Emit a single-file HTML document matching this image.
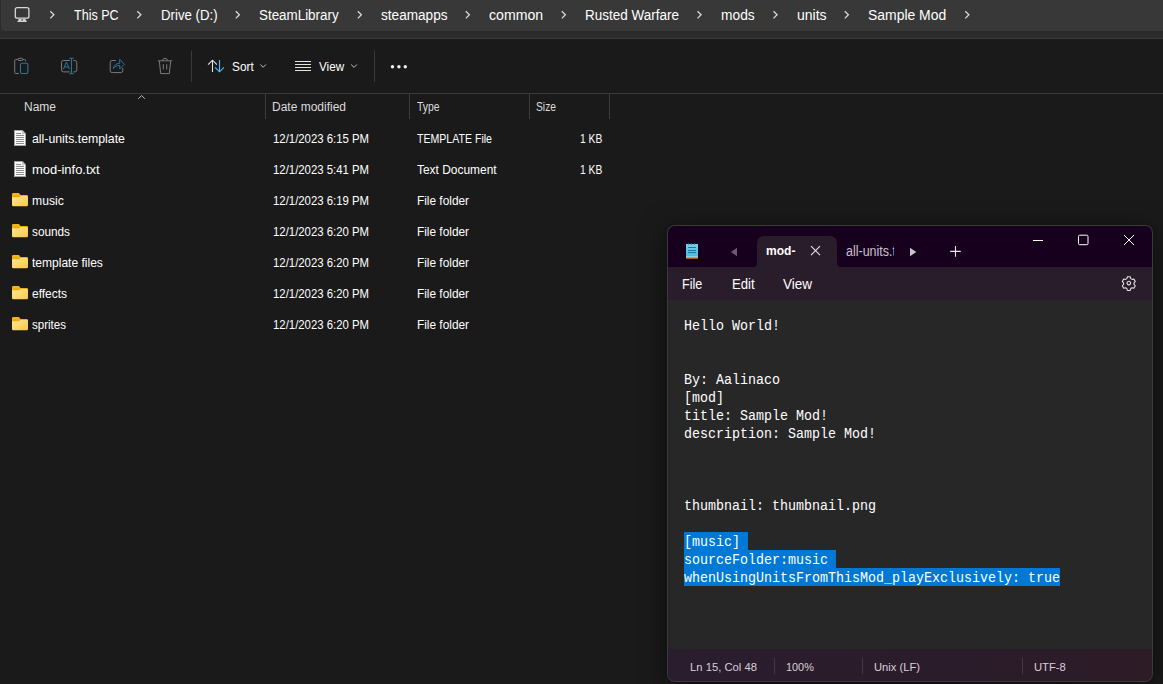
<!DOCTYPE html>
<html><head><meta charset="utf-8">
<style>
*{margin:0;padding:0;box-sizing:border-box}
html,body{width:1163px;height:684px;overflow:hidden;background:#1a1a1a}
body{position:relative;font-family:"Liberation Sans",sans-serif}
.a{position:absolute}
.t{position:absolute;white-space:pre;line-height:1;transform-origin:0 0;font-family:"Liberation Sans",sans-serif}
svg{position:absolute;overflow:visible}
.mono{position:absolute;left:684px;top:317px;font-family:"Liberation Mono",monospace;font-size:14.5px;line-height:18px;color:#fff;white-space:pre;transform-origin:0 0}
</style></head><body>
<!-- ===== Explorer header strip ===== -->
<div class="a" style="left:0;top:0;width:1163px;height:38px;background:#2c2c2c"></div>
<div class="a" style="left:1px;top:-10px;width:1200px;height:41px;background:#383838;border-radius:4px"></div>
<div class="a" style="left:0;top:38px;width:1163px;height:1px;background:#3a3a3a"></div>
<!-- monitor icon -->
<svg style="left:0;top:0" width="40" height="30">
 <rect x="15.3" y="7.6" width="13.6" height="10.6" rx="2" fill="none" stroke="#d8d8d8" stroke-width="1.3"/>
 <path d="M17.2 21.9h9.8l-1.6-3h-6.6z" fill="#d0d0d0"/>
 <rect x="21.4" y="19.4" width="1.6" height="1.1" fill="#383838"/>
</svg>
<!-- breadcrumb chevrons -->
<svg style="left:0;top:0" width="1163" height="30">
 <g fill="none" stroke="#dcdcdc" stroke-width="1.25">
  <path d="M50.3 11.2l3.6 3.6-3.6 3.6"/>
  <path d="M137.3 11.2l3.6 3.6-3.6 3.6"/>
  <path d="M235.8 11.2l3.6 3.6-3.6 3.6"/>
  <path d="M357.8 11.2l3.6 3.6-3.6 3.6"/>
  <path d="M465.8 11.2l3.6 3.6-3.6 3.6"/>
  <path d="M561.8 11.2l3.6 3.6-3.6 3.6"/>
  <path d="M697.5 11.2l3.6 3.6-3.6 3.6"/>
  <path d="M773.5 11.2l3.6 3.6-3.6 3.6"/>
  <path d="M844.8 11.2l3.6 3.6-3.6 3.6"/>
  <path d="M965.3 11.2l3.6 3.6-3.6 3.6"/>
 </g>
</svg>
<!-- ===== Command bar ===== -->
<svg style="left:0;top:0" width="420" height="95">
 <!-- paste -->
 <path d="M18.7 73.5h-3a1 1 0 0 1-1-1V60.5a1 1 0 0 1 1-1h2M22.8 59.5h1.8a1 1 0 0 1 1 1v1" fill="none" stroke="#7b7b7b" stroke-width="1"/>
 <rect x="17.8" y="58.3" width="5" height="2.2" rx="1.1" fill="none" stroke="#7b7b7b" stroke-width="1"/>
 <rect x="20.5" y="63.2" width="7.4" height="10.3" rx="1.4" fill="none" stroke="#2b739c" stroke-width="1.1"/>
 <!-- rename -->
 <path d="M69.8 60.5h-6.3a2 2 0 0 0-2 2v7.4a2 2 0 0 0 2 2h6.3M73.3 60.5h1.5a2 2 0 0 1 2 2v7.4a2 2 0 0 1-2 2h-1.5" fill="none" stroke="#7b7b7b" stroke-width="1"/>
 <path d="M71.5 58.3v15.5M69.2 58.3h4.6M69.2 73.8h4.6" fill="none" stroke="#2b739c" stroke-width="1.1"/>
 <path d="M63.3 69.3l3.1-7.3 3.1 7.3M64.4 67h4.1" fill="none" stroke="#2b739c" stroke-width="1"/>
 <!-- share -->
 <path d="M115.8 60.5h-3.6a2 2 0 0 0-2 2v8.1a2 2 0 0 0 2 2h8.6a2 2 0 0 0 2-2v-2.6" fill="none" stroke="#7b7b7b" stroke-width="1"/>
 <path d="M113.3 68.6c0.6-3.3 3-5.3 6.4-5.3v-4l4.6 5-4.6 4.7v-3.6c-2.6 0-4.6 1.1-6.4 3.2z" fill="none" stroke="#2b739c" stroke-width="1" stroke-linejoin="round"/>
 <!-- trash -->
 <path d="M157.8 60.8h14.3M159.3 61.2l1.4 12.4h8.6l1.4-12.4M163.3 64.2v5.2M166.7 64.2v5.2M162.6 60.6a2.4 2.2 0 0 1 4.8 0" fill="none" stroke="#7b7b7b" stroke-width="1"/>
 <!-- separators -->
 <path d="M191.5 50.5v31.5M374.5 50.5v31.5" stroke="#3a3a3a" stroke-width="1"/>
 <!-- sort icon -->
 <path d="M212.5 60.3v11.6M208.1 64.6l4.4-4.4 4.4 4.4" fill="none" stroke="#e2e2e2" stroke-width="1.1"/>
 <path d="M219.5 60.1v11.6M215.1 67.4l4.4 4.4 4.4-4.4" fill="none" stroke="#4cc2ff" stroke-width="1.1"/>
 <path d="M260.3 64.5l2.8 2.8 2.8-2.8" fill="none" stroke="#c0c0c0" stroke-width="1"/>
 <!-- view icon -->
 <path d="M295 61.5h16M295 64.5h16M295 67.5h16M295 70.5h16" stroke="#e4e4e4" stroke-width="1"/>
 <path d="M351.1 64.5l2.9 2.9 2.9-2.9" fill="none" stroke="#c0c0c0" stroke-width="1"/>
 <!-- more dots -->
 <circle cx="392.5" cy="66.7" r="1.7" fill="#f0f0f0"/><circle cx="398.9" cy="66.7" r="1.7" fill="#f0f0f0"/><circle cx="405.3" cy="66.7" r="1.7" fill="#f0f0f0"/>
</svg>
<div class="a" style="left:0;top:93px;width:1163px;height:1px;background:#393939"></div>
<!-- header column separators & sort caret -->
<svg style="left:0;top:0" width="620" height="125">
 <path d="M265.5 94v25M409.5 94v25M529.5 94v25M609.5 94v25" stroke="#3c3c3c" stroke-width="1"/>
 <path d="M138.3 98.8l3.3-3.3 3.3 3.3" fill="none" stroke="#bcbcbc" stroke-width="1"/>
</svg>
<!-- file icons -->
<svg style="left:0;top:0" width="40" height="340">
 <defs>
  <g id="doc">
   <path d="M0 0h8.5l3.5 3.5V16H0z" fill="#a4a4a4"/>
   <path d="M1 1h7.2l2.8 2.8V15H1z" fill="#fbfbfb"/>
   <path d="M8 0.3v3.9h3.9z" fill="#c8c8c8"/>
   <rect x="2" y="3" width="5" height="1" fill="#8e8e8e"/>
   <rect x="2" y="5" width="8" height="1" fill="#8e8e8e"/>
   <rect x="2" y="7" width="8" height="1" fill="#8e8e8e"/>
   <rect x="2" y="9" width="8" height="1" fill="#8e8e8e"/>
   <rect x="2" y="11" width="8" height="1" fill="#8e8e8e"/>
   <rect x="2" y="13" width="8" height="1" fill="#8e8e8e"/>
  </g>
  <linearGradient id="fg" x1="0" y1="0" x2="1" y2="1"><stop offset="0" stop-color="#ffe796"/><stop offset="1" stop-color="#f7c848"/></linearGradient>
  <linearGradient id="ft" x1="0" y1="0" x2="0" y2="1"><stop offset="0" stop-color="#f7b81c"/><stop offset="1" stop-color="#e9a404"/></linearGradient>
  <g id="folder">
   <path d="M0 1.3A1.3 1.3 0 0 1 1.3 0h5.6l1.6 1.9h6.2a1.3 1.3 0 0 1 1.3 1.3V5H0z" fill="url(#ft)"/>
   <path d="M0 4.2h7.2l1.2-1.2h6.3a1.3 1.3 0 0 1 1.3 1.3v7.6a1.3 1.3 0 0 1-1.3 1.3H1.3A1.3 1.3 0 0 1 0 11.9z" fill="url(#fg)"/>
  </g>
 </defs>
 <use href="#doc" x="14" y="130"/>
 <use href="#doc" x="14" y="161"/>
 <use href="#folder" x="12" y="193"/>
 <use href="#folder" x="12" y="224"/>
 <use href="#folder" x="12" y="255"/>
 <use href="#folder" x="12" y="286"/>
 <use href="#folder" x="12" y="317"/>
</svg>

<!-- ===== Notepad window ===== -->
<div class="a" style="left:667px;top:225px;width:486px;height:457px;border-radius:8px;background:#3a3a3a;box-shadow:0 6px 28px rgba(0,0,0,0.55)"></div>
<div class="a" style="left:668px;top:226px;width:484px;height:455px;border-radius:7px;overflow:hidden;background:#272727">
  <div class="a" style="left:0;top:0;width:484px;height:41px;background:#17001d"></div>
  <div class="a" style="left:0;top:41px;width:484px;height:33px;background:#2a1d2b"></div>
  <div class="a" style="left:0;top:423px;width:484px;height:32px;background:linear-gradient(90deg,#2a1d2d,#2b1c2b 60%,#2d1b26)"></div>
</div>
<!-- active tab -->
<svg style="left:0;top:0" width="1163" height="300">
 <path d="M753 267a4 4 0 0 0 4-4V243a7 7 0 0 1 7-7h66a7 7 0 0 1 7 7v20a4 4 0 0 0 4 4z" fill="#2a1d2b"/>
 <!-- notepad icon -->
 <rect x="686" y="244" width="12" height="14" fill="#5cc4e6"/>
 <rect x="686" y="244" width="12" height="14" fill="url(#npg)"/>
 <rect x="686" y="256.6" width="12" height="0.9" fill="#e8f6fa"/><rect x="686" y="257.5" width="12" height="1.4" fill="#c0600f"/>
 <path d="M688 247.5h8M688 250.5h8M688 252.5h8" stroke="#17708f" stroke-width="0.9"/>
 <path d="M688.5 243.3v1.5M691.5 243.3v1.5M694.5 243.3v1.5" stroke="#17708f" stroke-width="0.9"/>
 <defs><linearGradient id="npg" x1="0" y1="0" x2="0" y2="1"><stop offset="0" stop-color="#8bdcf5" stop-opacity="0.6"/><stop offset="1" stop-color="#2fa9d6" stop-opacity="0.4"/></linearGradient></defs>
 <!-- tab scroll arrows -->
 <path d="M731 252l6-4.2v8.4z" fill="#6d5a75"/>
 <path d="M916.3 252l-6.3-4.2v8.4z" fill="#c9c3cc"/>
 <!-- tab close -->
 <path d="M811 246.2l9 9M820 246.2l-9 9" stroke="#e0dbe2" stroke-width="1.2"/>
 <!-- plus -->
 <path d="M955.5 246v10.8M950.2 251.4h10.6" stroke="#e8e8e8" stroke-width="1.1"/>
 <!-- window controls -->
 <path d="M1033 240.5h10" stroke="#ffffff" stroke-width="1"/>
 <rect x="1078.5" y="235.2" width="9.5" height="9.5" rx="1.2" fill="none" stroke="#ffffff" stroke-width="1"/>
 <path d="M1124 235l10 10M1134 235l-10 10" stroke="#ffffff" stroke-width="1"/>
 <!-- gear -->
 <g transform="translate(1128.8 283.1) scale(0.88)" fill="none" stroke="#e8e4ea" stroke-width="1.2">
  <path d="M-1.6-7.2h3.2l0.6 2.1 1.5 0.9 2.1-0.5 1.6 2.8-1.5 1.6v1.7l1.5 1.6-1.6 2.8-2.1-0.5-1.5 0.9-0.6 2.1h-3.2l-0.6-2.1-1.5-0.9-2.1 0.5-1.6-2.8 1.5-1.6v-1.7l-1.5-1.6 1.6-2.8 2.1 0.5 1.5-0.9z" stroke-linejoin="round"/>
  <circle r="2"/>
 </g>
</svg>
<!-- status separators -->
<div class="a" style="left:774px;top:658px;width:1px;height:16px;background:#413843"></div>
<div class="a" style="left:862px;top:658px;width:1px;height:16px;background:#413843"></div>
<div class="a" style="left:1022px;top:658px;width:1px;height:16px;background:#413843"></div>
<!-- selection -->
<div class="a" style="left:684px;top:532px;width:64px;height:18px;background:#0078d4"></div>
<div class="a" style="left:684px;top:550px;width:152px;height:18px;background:#0078d4"></div>
<div class="a" style="left:684px;top:568px;width:376px;height:18px;background:#0078d4"></div>
<div class="mono" style="transform:scaleX(0.9195)">Hello World!


By: Aalinaco
[mod]
title: Sample Mod!
description: Sample Mod!



thumbnail: thumbnail.png

[music]
sourceFolder:music
whenUsingUnitsFromThisMod_playExclusively: true</div>
<div class=t style="left:74.2px;top:8.35px;font-size:14px;color:#ffffff;font-weight:400;transform:scaleX(0.8956);">This PC</div>
<div class=t style="left:160.6px;top:8.35px;font-size:14px;color:#ffffff;font-weight:400;transform:scaleX(0.9467);">Drive (D:)</div>
<div class=t style="left:259.0px;top:8.35px;font-size:14px;color:#ffffff;font-weight:400;transform:scaleX(0.9560);">SteamLibrary</div>
<div class=t style="left:381.0px;top:8.35px;font-size:14px;color:#ffffff;font-weight:400;transform:scaleX(0.9710);">steamapps</div>
<div class=t style="left:489.3px;top:8.35px;font-size:14px;color:#ffffff;font-weight:400;transform:scaleX(1.0077);">common</div>
<div class=t style="left:585.2px;top:8.35px;font-size:14px;color:#ffffff;font-weight:400;transform:scaleX(0.9629);">Rusted Warfare</div>
<div class=t style="left:721.3px;top:8.35px;font-size:14px;color:#ffffff;font-weight:400;transform:scaleX(0.9844);">mods</div>
<div class=t style="left:797.0px;top:8.35px;font-size:14px;color:#ffffff;font-weight:400;">units</div>
<div class=t style="left:868.1px;top:8.35px;font-size:14px;color:#ffffff;font-weight:400;transform:scaleX(0.9950);">Sample Mod</div>
<div class=t style="left:232.1px;top:60.62px;font-size:12.5px;color:#ffffff;font-weight:400;transform:scaleX(0.9504);">Sort</div>
<div class=t style="left:318.9px;top:60.52px;font-size:12.5px;color:#ffffff;font-weight:400;transform:scaleX(0.9340);">View</div>
<div class=t style="left:24.0px;top:101.04px;font-size:12px;color:#dcdcdc;font-weight:400;">Name</div>
<div class=t style="left:272.0px;top:101.04px;font-size:12px;color:#dcdcdc;font-weight:400;">Date modified</div>
<div class=t style="left:417.4px;top:101.04px;font-size:12px;color:#dcdcdc;font-weight:400;transform:scaleX(0.8687);">Type</div>
<div class=t style="left:536.0px;top:101.04px;font-size:12px;color:#dcdcdc;font-weight:400;transform:scaleX(0.8568);">Size</div>
<div class=t style="left:32.1px;top:132.70px;font-size:12.4px;color:#ffffff;font-weight:400;transform:scaleX(0.9918);">all-units.template</div>
<div class=t style="left:272.8px;top:132.70px;font-size:12.4px;color:#ffffff;font-weight:400;transform:scaleX(0.9177);">12/1/2023 6:15 PM</div>
<div class=t style="left:416.6px;top:132.70px;font-size:12.4px;color:#ffffff;font-weight:400;transform:scaleX(0.8532);">TEMPLATE File</div>
<div class=t style="left:579.7px;top:132.70px;font-size:12.4px;color:#ffffff;font-weight:400;transform:scaleX(0.8298);">1 KB</div>
<div class=t style="left:32.1px;top:163.70px;font-size:12.4px;color:#ffffff;font-weight:400;transform:scaleX(1.0443);">mod-info.txt</div>
<div class=t style="left:272.8px;top:163.70px;font-size:12.4px;color:#ffffff;font-weight:400;transform:scaleX(0.9177);">12/1/2023 5:41 PM</div>
<div class=t style="left:416.6px;top:163.70px;font-size:12.4px;color:#ffffff;font-weight:400;transform:scaleX(0.9632);">Text Document</div>
<div class=t style="left:579.7px;top:163.70px;font-size:12.4px;color:#ffffff;font-weight:400;transform:scaleX(0.8298);">1 KB</div>
<div class=t style="left:32.1px;top:194.70px;font-size:12.4px;color:#ffffff;font-weight:400;transform:scaleX(0.9827);">music</div>
<div class=t style="left:272.8px;top:194.70px;font-size:12.4px;color:#ffffff;font-weight:400;transform:scaleX(0.9177);">12/1/2023 6:19 PM</div>
<div class=t style="left:416.6px;top:194.70px;font-size:12.4px;color:#ffffff;font-weight:400;transform:scaleX(0.9558);">File folder</div>
<div class=t style="left:32.1px;top:225.70px;font-size:12.4px;color:#ffffff;font-weight:400;transform:scaleX(0.9507);">sounds</div>
<div class=t style="left:272.8px;top:225.70px;font-size:12.4px;color:#ffffff;font-weight:400;transform:scaleX(0.9177);">12/1/2023 6:20 PM</div>
<div class=t style="left:416.6px;top:225.70px;font-size:12.4px;color:#ffffff;font-weight:400;transform:scaleX(0.9558);">File folder</div>
<div class=t style="left:32.1px;top:256.70px;font-size:12.4px;color:#ffffff;font-weight:400;transform:scaleX(0.9710);">template files</div>
<div class=t style="left:272.8px;top:256.70px;font-size:12.4px;color:#ffffff;font-weight:400;transform:scaleX(0.9177);">12/1/2023 6:20 PM</div>
<div class=t style="left:416.6px;top:256.70px;font-size:12.4px;color:#ffffff;font-weight:400;transform:scaleX(0.9558);">File folder</div>
<div class=t style="left:32.1px;top:287.70px;font-size:12.4px;color:#ffffff;font-weight:400;transform:scaleX(0.9674);">effects</div>
<div class=t style="left:272.8px;top:287.70px;font-size:12.4px;color:#ffffff;font-weight:400;transform:scaleX(0.9177);">12/1/2023 6:20 PM</div>
<div class=t style="left:416.6px;top:287.70px;font-size:12.4px;color:#ffffff;font-weight:400;transform:scaleX(0.9558);">File folder</div>
<div class=t style="left:32.1px;top:318.70px;font-size:12.4px;color:#ffffff;font-weight:400;transform:scaleX(0.9315);">sprites</div>
<div class=t style="left:272.8px;top:318.70px;font-size:12.4px;color:#ffffff;font-weight:400;transform:scaleX(0.9177);">12/1/2023 6:20 PM</div>
<div class=t style="left:416.6px;top:318.70px;font-size:12.4px;color:#ffffff;font-weight:400;transform:scaleX(0.9558);">File folder</div>
<div class=t style="left:765.6px;top:245.16px;font-size:12.8px;color:#ffffff;font-weight:700;transform:scaleX(0.9399);">mod-</div>
<div class=t style="left:845.8px;top:244.15px;font-size:14px;color:#c9c1cd;font-weight:400;transform:scaleX(0.8924);">all-units.t</div>
<div class=t style="left:682.3px;top:277.15px;font-size:14px;color:#ffffff;font-weight:400;transform:scaleX(0.8997);">File</div>
<div class=t style="left:731.7px;top:277.15px;font-size:14px;color:#ffffff;font-weight:400;transform:scaleX(0.9409);">Edit</div>
<div class=t style="left:783.4px;top:277.15px;font-size:14px;color:#ffffff;font-weight:400;transform:scaleX(0.9670);">View</div>
<div class=t style="left:689.5px;top:661.48px;font-size:11.6px;color:#d8d0da;font-weight:400;transform:scaleX(0.9700);">Ln 15, Col 48</div>
<div class=t style="left:785.9px;top:661.48px;font-size:11.6px;color:#d8d0da;font-weight:400;transform:scaleX(0.9374);">100%</div>
<div class=t style="left:874.4px;top:661.48px;font-size:11.6px;color:#d8d0da;font-weight:400;transform:scaleX(0.9670);">Unix (LF)</div>
<div class=t style="left:1034.0px;top:661.48px;font-size:11.6px;color:#d8d0da;font-weight:400;transform:scaleX(0.9678);">UTF-8</div>
<div class="a" style="left:894px;top:242px;width:12px;height:18px;background:#17001d"></div>
</body></html>
